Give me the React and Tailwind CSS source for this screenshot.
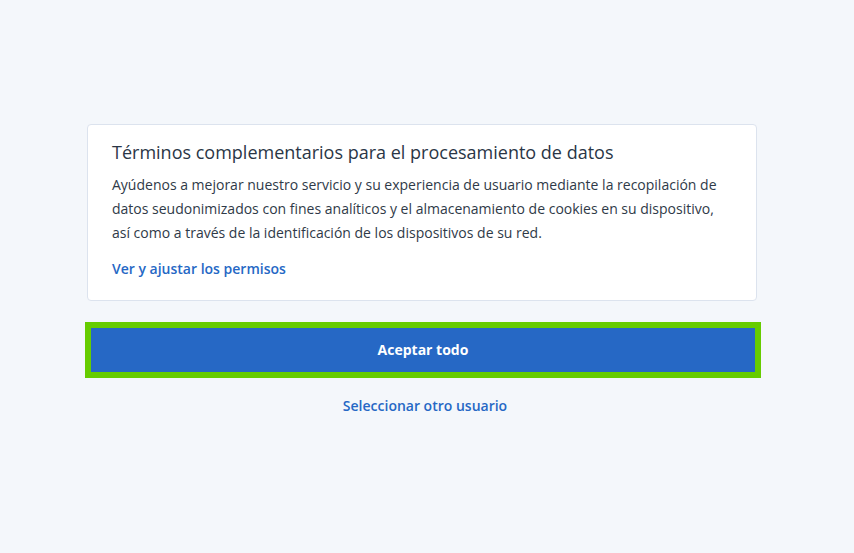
import React from 'react';

const App = () => {
  return (
    <div className="min-h-[553px] w-full bg-[#f4f7fb] pt-[124px] pl-[87px] font-['Open_Sans',sans-serif]">
      <div className="w-[670px]">
        <div className="rounded-[4px] border border-[#dce3ee] bg-white px-6 pt-[14px] pb-[19px]">
          <h2 className="text-[18px] leading-[26px] text-[#2a3646]">
            Términos complementarios para el procesamiento de datos
          </h2>
          <p className="mt-[8px] text-[14px] leading-[24px] text-[#2f3a48]">
            Ayúdenos a mejorar nuestro servicio y su experiencia de usuario mediante la recopilación de datos seudonimizados con fines analíticos y el almacenamiento de cookies en su dispositivo, así como a través de la identificación de los dispositivos de su red.
          </p>
          <a href="#" className="mt-[12px] block text-[14px] leading-[24px] font-semibold text-[#2668c5]">
            Ver y ajustar los permisos
          </a>
        </div>

        <button className="-ml-[2px] mt-[21px] flex h-[56px] w-[676px] items-center justify-center border-[6px] border-[#66cc00] bg-[#2668c5] pb-[2px] text-[14px] font-bold text-white">
          Aceptar todo
        </button>

        <div className="mt-[15px] pl-[6px] text-center">
          <a href="#" className="text-[14px] leading-[24px] font-semibold text-[#2668c5]">
            Seleccionar otro usuario
          </a>
        </div>
      </div>
    </div>
  );
};

export default App;
